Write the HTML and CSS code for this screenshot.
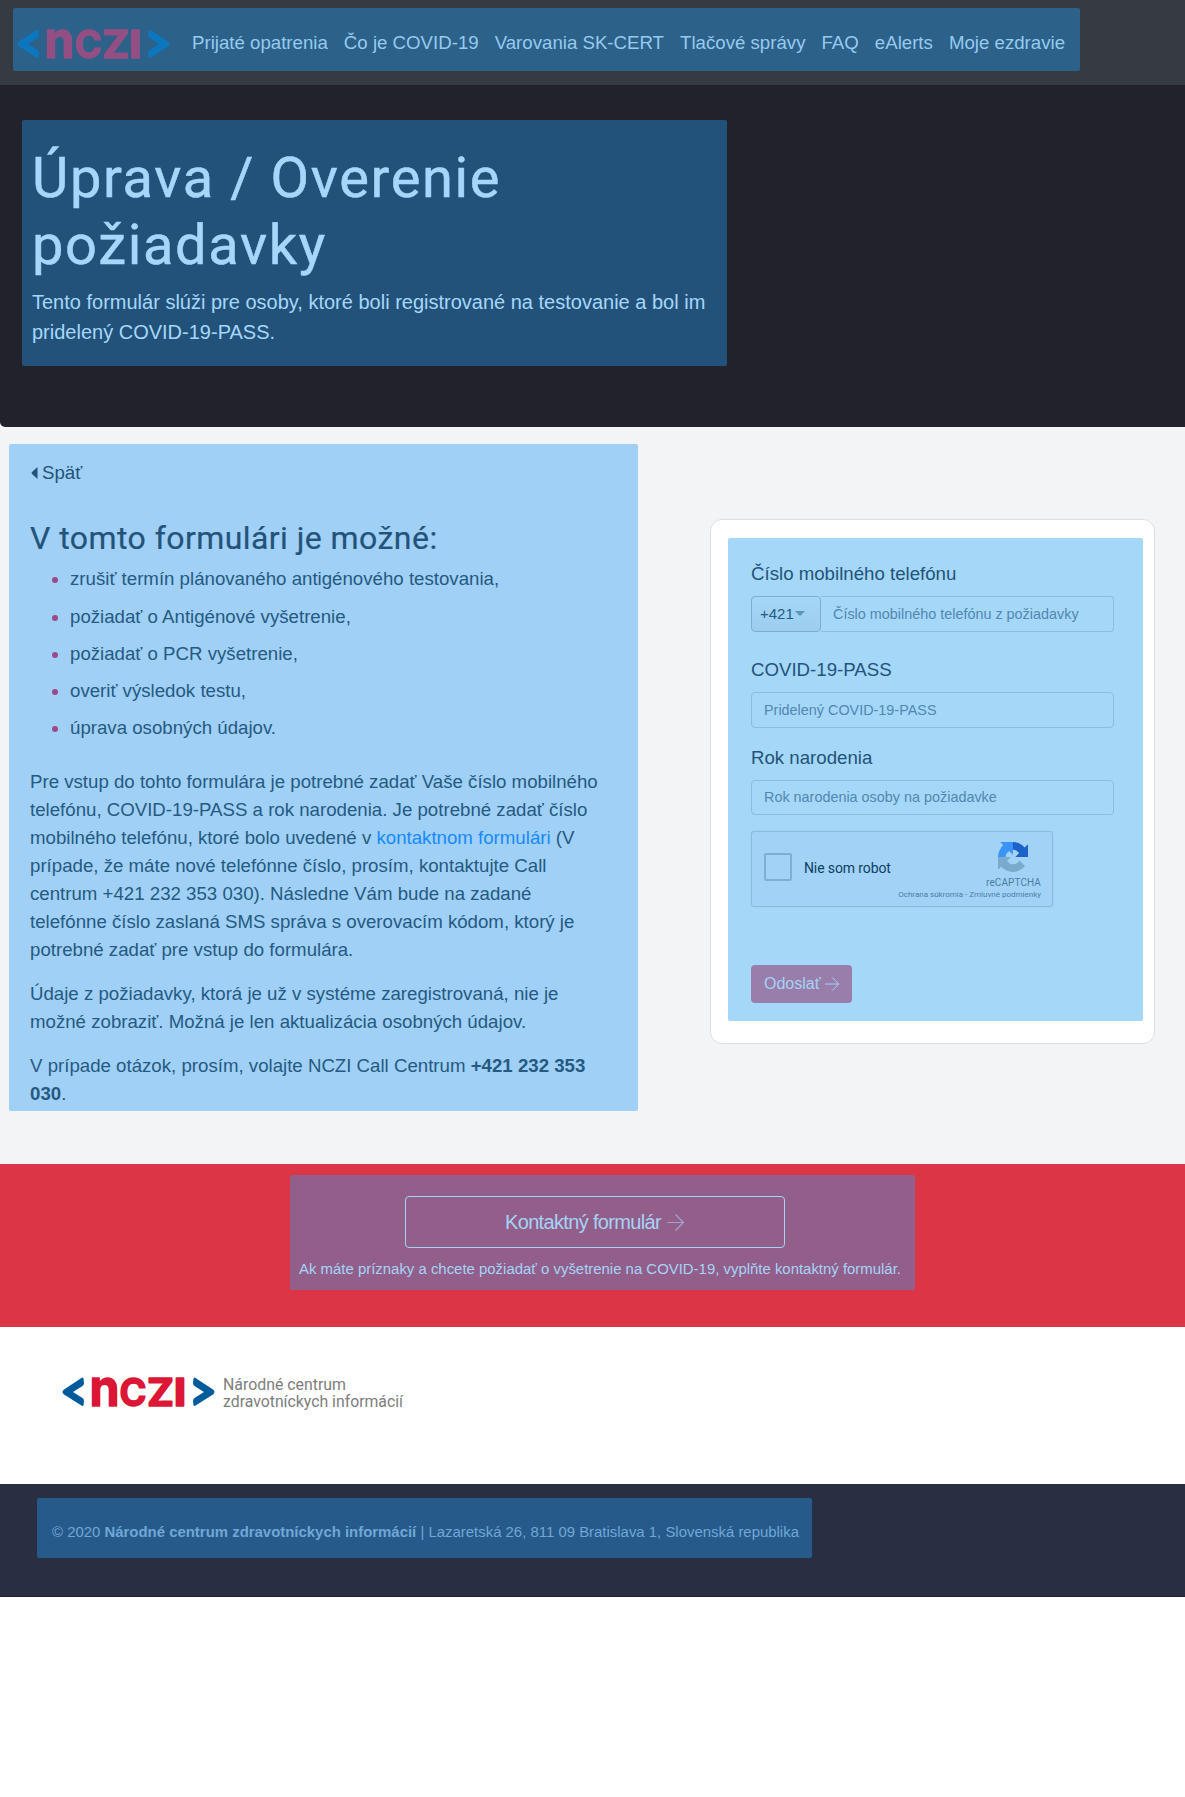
FILE: index.html
```html
<!DOCTYPE html>
<html lang="sk">
<head>
<meta charset="utf-8">
<title>Úprava / Overenie požiadavky</title>
<link rel="stylesheet" href="styles.css">
</head>
<body>
<svg class="defs" width="0" height="0" aria-hidden="true">
  <symbol id="arrow" viewBox="0 0 16 16">
    <path d="M1 8H14.500M8 1.300L14.700 8L8 14.700" fill="none" stroke="currentColor"/>
  </symbol>
</svg>

<header class="topbar">
  <nav class="nav">
    <svg class="logo logo-nav" viewBox="0 0 153 32">
      <path class="chev" d="M19.500 1Q21 0 21.500 1.500L22 6Q22 8 20.500 9L11 15L20.500 21Q22 22 22 24L21.500 28Q21 29.500 19.500 28.500L2 17.500Q-1 15 2 12.500Z"/>
      <path class="chev" d="M133.500 1Q132 0 131.500 1.500L131 6Q131 8 132.500 9L142 15L132.500 21Q131 22 131 24L131.500 28Q132 29.500 133.500 28.500L151 17.500Q154 15 151 12.500Z"/>
      <text class="word" x="27.500" y="28.500" font-size="51" textLength="30" lengthAdjust="spacingAndGlyphs">n</text>
      <text class="word" x="57.500" y="28.500" font-size="38" textLength="27" lengthAdjust="spacingAndGlyphs">C</text>
      <text class="word" x="85" y="28.500" font-size="38" textLength="27" lengthAdjust="spacingAndGlyphs">Z</text>
      <text class="word" x="111.500" y="28.500" font-size="38" textLength="13" lengthAdjust="spacingAndGlyphs">I</text>
    </svg>
    <a>Prijaté opatrenia</a>
    <a>Čo je COVID-19</a>
    <a>Varovania SK-CERT</a>
    <a>Tlačové správy</a>
    <a>FAQ</a>
    <a>eAlerts</a>
    <a>Moje ezdravie</a>
  </nav>
</header>

<section class="hero-wrap">
  <div class="hero">
    <div class="hero-box">
      <h1>Úprava / Overenie požiadavky</h1>
      <p>Tento formulár slúži pre osoby, ktoré boli registrované na testovanie a bol im pridelený COVID-19-PASS.</p>
    </div>
  </div>
</section>

<main class="main">
  <article class="info">
    <a class="back"><svg width="7" height="12" viewBox="0 0 7 12"><path d="M6.500 0V12L.8 6.700Q.2 6 .8 5.300Z" fill="currentColor"/></svg>Späť</a>
    <h2>V tomto formulári je možné:</h2>
    <ul>
      <li>zrušiť termín plánovaného antigénového testovania,</li>
      <li>požiadať o Antigénové vyšetrenie,</li>
      <li>požiadať o PCR vyšetrenie,</li>
      <li>overiť výsledok testu,</li>
      <li>úprava osobných údajov.</li>
    </ul>
    <p>Pre vstup do tohto formulára je potrebné zadať Vaše číslo mobilného telefónu, COVID-19-PASS a rok narodenia. Je potrebné zadať číslo mobilného telefónu, ktoré bolo uvedené v <a class="link">kontaktnom formulári</a> (V prípade, že máte nové telefónne číslo, prosím, kontaktujte Call centrum +421 232 353 030). Následne Vám bude na zadané telefónne číslo zaslaná SMS správa s overovacím kódom, ktorý je potrebné zadať pre vstup do formulára.</p>
    <p>Údaje z požiadavky, ktorá je už v systéme zaregistrovaná, nie je možné zobraziť. Možná je len aktualizácia osobných údajov.</p>
    <p>V prípade otázok, prosím, volajte NCZI Call Centrum <b>+421 232 353 030</b>.</p>
  </article>

  <div class="card">
    <form class="form">
      <label for="tel">Číslo mobilného telefónu</label>
      <div class="group group-tel">
        <div class="prefix">+421<i class="caret"></i></div>
        <input id="tel" type="text" placeholder="Číslo mobilného telefónu z požiadavky">
      </div>
      <label for="pass">COVID-19-PASS</label>
      <div class="group group-pass"><input id="pass" type="text" placeholder="Pridelený COVID-19-PASS"></div>
      <label for="rok">Rok narodenia</label>
      <div class="group group-year"><input id="rok" type="text" placeholder="Rok narodenia osoby na požiadavke"></div>
      <div class="captcha">
        <span class="box"></span>
        <span class="robot">Nie som robot</span>
        <div class="brand">
          <svg width="30" height="30" viewBox="0 0 64 64">
            <path fill="#1d62c8" d="M64 31.955l-.033-1.370V4.687l-7.160 7.160C50.948 4.674 42.033.093 32.050.093c-10.400 0-19.622 4.960-25.458 12.640l11.736 11.860a15.550 15.550 0 0 1 4.754-5.334c2.050-1.600 4.952-2.906 8.968-2.906.485 0 .860.057 1.135.163 4.976.393 9.288 3.140 11.828 7.124l-8.307 8.307L64 31.953"/>
            <path fill="#3b93f3" d="M31.862.094l-1.370.033H4.594l7.160 7.160C4.580 13.147 0 22.060 0 32.046c0 10.400 4.960 19.622 12.640 25.458L24.500 45.768a15.550 15.550 0 0 1-5.334-4.754c-1.600-2.050-2.906-4.952-2.906-8.968 0-.485.057-.860.163-1.135.393-4.976 3.140-9.288 7.124-11.828l8.307 8.307L31.860.095"/>
            <path fill="#7aaacc" d="M.001 32.045l.033 1.370v25.898l7.160-7.160c5.860 7.173 14.774 11.754 24.760 11.754 10.400 0 19.622-4.960 25.458-12.640l-11.736-11.860a15.550 15.550 0 0 1-4.754 5.334c-2.050 1.600-4.952 2.906-8.968 2.906-.485 0-.860-.057-1.135-.163-4.976-.393-9.288-3.140-11.828-7.124l8.307-8.307c-10.522.040-22.400.066-27.295-.005"/>
          </svg>
          <span class="brand-name">reCAPTCHA</span>
          <span class="brand-links">Ochrana súkromia - Zmluvné podmienky</span>
        </div>
      </div>
      <button class="submit" type="button">Odoslať <svg width="16" height="16"><use href="#arrow"/></svg></button>
    </form>
  </div>
</main>

<section class="cta">
  <div class="cta-box">
    <a class="cta-btn"><span>Kontaktný formulár</span><svg width="19" height="19"><use href="#arrow"/></svg></a>
    <p>Ak máte príznaky a chcete požiadať o vyšetrenie na COVID-19, vyplňte kontaktný formulár.</p>
  </div>
</section>

<section class="brandbar">
  <svg class="logo logo-foot" viewBox="0 0 153 32">
    <path class="chev" d="M19.500 1Q21 0 21.500 1.500L22 6Q22 8 20.500 9L11 15L20.500 21Q22 22 22 24L21.500 28Q21 29.500 19.500 28.500L2 17.500Q-1 15 2 12.500Z"/>
    <path class="chev" d="M133.500 1Q132 0 131.500 1.500L131 6Q131 8 132.500 9L142 15L132.500 21Q131 22 131 24L131.500 28Q132 29.500 133.500 28.500L151 17.500Q154 15 151 12.500Z"/>
    <text class="word" x="27.500" y="28.500" font-size="51" textLength="30" lengthAdjust="spacingAndGlyphs">n</text>
    <text class="word" x="57.500" y="28.500" font-size="38" textLength="27" lengthAdjust="spacingAndGlyphs">C</text>
    <text class="word" x="85" y="28.500" font-size="38" textLength="27" lengthAdjust="spacingAndGlyphs">Z</text>
    <text class="word" x="111.500" y="28.500" font-size="38" textLength="13" lengthAdjust="spacingAndGlyphs">I</text>
  </svg>
  <svg class="tagline" width="184" height="46">
    <text x="0" y="17" textLength="123" lengthAdjust="spacingAndGlyphs">Národné centrum</text>
    <text x="0" y="34" textLength="180" lengthAdjust="spacingAndGlyphs">zdravotníckych informácií</text>
  </svg>
</section>

<footer class="footer">
  <p>© 2020 <b>Národné centrum zdravotníckych informácií</b> | Lazaretská 26, 811 09 Bratislava 1, Slovenská republika</p>
</footer>
</body>
</html>
```
FILE: styles.css
```css
* { box-sizing: border-box; }
body {
  margin: 0;
  background: #fff;
  font: 18.667px/28px "Liberation Sans", Arial, sans-serif;
  color: #255a82;
}
h1, h2, p, ul { margin: 0; padding: 0; font-weight: 400; }
.defs { display: block; height: 0; }

.topbar { height: 85px; padding: 8px 13px; background: #363a43; }
.nav {
  display: flex;
  align-items: center;
  gap: 16px;
  width: 1067px;
  height: 63px;
  padding: 7px 5px 0;
  border-radius: 2px;
  background: #2c6189;
  color: #96caef;
  white-space: nowrap;
}
.logo { width: 153px; height: 32px; flex: none; overflow: visible; }
.chev { fill: var(--chev); }
.word {
  fill: var(--word);
  stroke: var(--word);
  stroke-width: 1.500;
  stroke-linejoin: round;
  font-family: Inter, Roboto, sans-serif;
  font-weight: 700;
}
.logo-nav { --chev: #0c77bf; --word: #934f83; margin: 4px 6px 0 -1px; }
.logo-foot { --chev: #005b9c; --word: #dc1735; }

.hero-wrap { background: #fff; }
.hero { height: 342px; padding: 35px 22px 0; border-radius: 0 0 0 5px; background: #21222b; }
.hero-box {
  width: 705px;
  height: 246px;
  padding: 25px 10px 0;
  border-radius: 2px;
  background: #225279;
  color: #a6d7fa;
}
.hero-box h1 { width: 560px; font: 400 56px/67.200px Roboto, sans-serif; letter-spacing: 1.650px; -webkit-text-stroke: .5px; }
.hero-box p { margin-top: 8px; font-size: 20px; line-height: 30px; }

.main {
  display: flex;
  align-items: flex-start;
  justify-content: space-between;
  height: 737px;
  padding: 17px 30px 0 9px;
  background: #f3f4f6;
}
.info { width: 629px; height: 667px; padding: 15px 35px 0 21px; border-radius: 2px; background: #a0d0f5; }
.back { display: flex; align-items: center; gap: 4px; color: #235379; }
.back svg { margin-left: 1px; }
.info h2 { margin-top: 32px; font: 400 32px/38.400px Roboto, sans-serif; letter-spacing: .44px; color: #235379; -webkit-text-stroke: .2px; }
.info ul { margin: 8px 0 25.500px; padding-left: 40px; }
.info li { margin-bottom: 9.200px; }
.info li::marker { color: #9b4a86; }
.info p + p { margin-top: 16px; }
.link { color: #1889fb; }

.card {
  width: 445px;
  height: 525px;
  margin-top: 75px;
  padding: 18px 11px 0 17px;
  border: 1px solid #dcdfe2;
  border-radius: 12px;
  background: #fff;
}
.form { height: 483px; padding: 22px 29px 0 23px; border-radius: 2px; background: #a5d7f9; }
.form label { display: block; color: #235379; }
.group { display: flex; height: 36px; margin-top: 8px; }
.group input {
  flex: 1;
  min-width: 0;
  padding: 0 12px;
  border: 1px solid #8bbde2;
  border-radius: 4px;
  background: transparent;
  font: 14.400px "Liberation Sans", Arial, sans-serif;
}
.group input::placeholder { color: #5188b0; opacity: 1; }
.prefix {
  display: flex;
  align-items: center;
  gap: 1px;
  width: 70px;
  padding-left: 8px;
  border: 1px solid #7fadd0;
  border-radius: 4px;
  background: linear-gradient(#a5d7f9, #9ccdef);
  font-size: 15px;
}
.group-tel input { border-left: 0; border-radius: 0 4px 4px 0; }
.caret { margin-top: -2px; border: 5px solid transparent; border-top-color: #5b92b8; border-bottom: 0; }
.group-tel { margin-bottom: 24px; }
.group-pass { margin-bottom: 16px; }
.group-year { height: 35px; margin-bottom: 16px; }
.group-year input { padding-bottom: 1px; }

.captcha {
  display: flex;
  align-items: center;
  width: 302px;
  height: 76px;
  padding: 0 12px;
  border: 1px solid #8bbadd;
  border-radius: 3px;
  background: #a2d3f6;
  box-shadow: 0 0 2px #98c9eb;
  font-family: Roboto, sans-serif;
}
.box { width: 28px; height: 28px; margin-top: -5px; border: 2px solid #80aed2; border-radius: 2px; }
.robot { margin: -2px 0 0 12px; font-size: 14px; letter-spacing: -.12px; color: #0e3f66; white-space: nowrap; }
.brand { display: flex; flex: 1; flex-direction: column; align-items: flex-end; margin: 4px -1px 0 -40px; color: #4a7ea5; }
.brand svg { margin-right: 13px; }
.brand-name { margin-top: 4px; font-size: 10px; line-height: 13px; letter-spacing: .1px; }
.brand-links { font-size: 8px; line-height: 11px; white-space: nowrap; }
.submit {
  display: flex;
  align-items: center;
  gap: 3px;
  width: 101px;
  height: 38px;
  margin-top: 58px;
  padding: 0 0 0 13px;
  border: 0;
  border-radius: 4px;
  background: #997dab;
  color: #a5d3f6;
  font: 16px "Liberation Sans", Arial, sans-serif;
}

.cta { height: 163px; padding: 11px 0 0 290px; background: #dc3545; }
.cta-box {
  display: flex;
  flex-direction: column;
  align-items: center;
  width: 625px;
  height: 115px;
  padding-top: 21px;
  border-radius: 2px;
  background: #925f8b;
  color: #a5d3f6;
}
.cta-btn {
  display: flex;
  align-items: center;
  justify-content: center;
  gap: 5px;
  width: 380px;
  height: 52px;
  margin-right: 15px;
  border: 1px solid #a5d3f6;
  border-radius: 4px;
  font-size: 20px;
  letter-spacing: -.660px;
}
.cta-btn svg { color: #a2a3cd; }
.cta-box p { margin-top: 7px; padding-right: 5px; font-size: 14.933px; white-space: nowrap; }

.brandbar { display: flex; height: 157px; padding: 50px 0 0 62px; gap: 8px; background: #fff; }
.tagline { margin-top: -4px; font-family: Roboto, sans-serif; font-size: 17px; fill: #7d7d7d; overflow: visible; }

.footer { height: 113px; padding: 14px 37px 0; border-bottom: 1px solid #22243f; background: #2a2e42; }
.footer p {
  width: 775px;
  height: 60px;
  padding: 20px 0 0 15px;
  border-radius: 2px;
  background: #265a8a;
  color: #70a7d7;
  font-size: 14.933px;
  white-space: nowrap;
}
```
